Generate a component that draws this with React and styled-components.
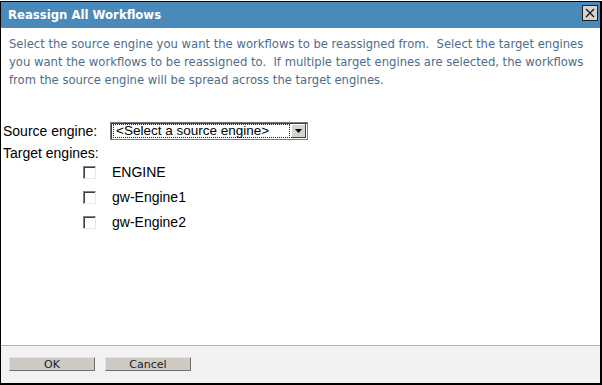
import React from "react";
import styled, { createGlobalStyle } from "styled-components";

const GlobalStyle = createGlobalStyle`
  html, body {
    margin: 0;
    padding: 0;
    background: #fff;
  }
  body {
    font-family: "DejaVu Sans", sans-serif;
  }
`;

const Dialog = styled.div`
  margin-top: 1px;
  width: 602px;
  height: 384px;
  box-sizing: border-box;
  border-top: 1px solid #000;
  border-left: 1px solid #000;
  border-right: 2px solid #000;
  border-bottom: 2px solid #000;
  display: flex;
  flex-direction: column;
  background: #fff;
`;

const TitleBar = styled.div`
  height: 26px;
  flex-shrink: 0;
  background: #4a8aba;
  display: flex;
  align-items: center;
  justify-content: space-between;
  padding: 0 2px 0 7px;
  .dialog__title {
    color: #fff;
    font-family: "DejaVu Sans", sans-serif;
    font-weight: bold;
    font-size: 11.7px;
  }
`;

const CloseButton = styled.div`
  width: 14px;
  height: 14px;
  background: #d6d3ce;
  border: 1px solid #222;
  display: flex;
  align-items: center;
  justify-content: center;
  align-self: flex-start;
  margin-top: 3px;
`;

const Content = styled.div`
  flex: 1;
  padding-top: 7px;
`;

const Description = styled.div`
  color: #4e6d8c;
  font-size: 11.6px;
  line-height: 18px;
  padding-left: 8px;
  white-space: pre;
  margin-bottom: 31px;
`;

const FieldRow = styled.div`
  display: flex;
  align-items: ${(p) => (p.top ? "flex-start" : "center")};
  height: ${(p) => p.height || 22}px;
  box-sizing: border-box;
  padding: ${(p) => p.top || 0}px 0 0 2px;
  font-family: "Liberation Sans", Arial, sans-serif;
  font-size: 14px;
  line-height: 16px;
  color: #000;
  .field__label {
    width: 107px;
  }
`;

const SelectBox = styled.div`
  width: 198px;
  height: 18px;
  box-sizing: border-box;
  border: 1px solid #7a7a7a;
  box-shadow: inset 1px 1px 0 #404040;
  display: flex;
  background: #fff;
  .select__value {
    flex: 1;
    box-sizing: border-box;
    height: 14px;
    margin: 1px 1px 0 2px;
    border: 1px dotted #222;
    font-size: 13.5px;
    line-height: 12px;
    padding-left: 2px;
    white-space: nowrap;
  }
  .select__arrow {
    width: 15px;
    margin: 1px 1px 1px 0;
    background: #d6d3ce;
    box-shadow: inset -1px -1px 0 #404040, inset 1px 1px 0 #fff;
    display: flex;
    align-items: center;
    justify-content: center;
  }
`;

const CheckRow = styled.div`
  display: flex;
  align-items: center;
  height: 25px;
  padding-left: 82px;
  font-family: "Liberation Sans", Arial, sans-serif;
  font-size: 14px;
  color: #000;
`;

const CheckBox = styled.span`
  width: 13px;
  height: 13px;
  box-sizing: border-box;
  border-top: 1px solid #808080;
  border-left: 1px solid #808080;
  border-right: 1px solid #e8e8e8;
  border-bottom: 1px solid #e8e8e8;
  box-shadow: inset 1px 1px 0 #404040;
  background: #fff;
  margin-right: 16px;
`;

const Footer = styled.div`
  height: 38px;
  flex-shrink: 0;
  box-sizing: border-box;
  border-top: 1px solid #b4b4b4;
  background: #f2f2f2;
  display: flex;
  align-items: flex-start;
  gap: 10px;
  padding: 11px 0 0 8px;
`;

const Button = styled.div`
  width: 86px;
  height: 14px;
  box-sizing: border-box;
  background: #cdcac4;
  border-top: 1px solid #e4e2de;
  border-left: 1px solid #e4e2de;
  border-right: 1px solid #6e6e6e;
  border-bottom: 1px solid #6e6e6e;
  display: flex;
  align-items: center;
  justify-content: center;
  font-size: 11px;
  color: #1a1a1a;
`;

const engines = ["ENGINE", "gw-Engine1", "gw-Engine2"];

const descriptionLines = [
  "Select the source engine you want the workflows to be reassigned from.  Select the target engines",
  "you want the workflows to be reassigned to.  If multiple target engines are selected, the workflows",
  "from the source engine will be spread across the target engines.",
];

const App = () => {
  return (
    <>
      <GlobalStyle />
      <Dialog>
        <TitleBar>
          <span className="dialog__title">Reassign All Workflows</span>
          <CloseButton>
            <svg width="10" height="10" viewBox="0 0 10 10">
              <path d="M1 1 L9 9 M9 1 L1 9" stroke="#111" strokeWidth="1.2" />
            </svg>
          </CloseButton>
        </TitleBar>
        <Content>
          <Description>{descriptionLines.join("\n")}</Description>
          <FieldRow height={22}>
            <span className="field__label">Source engine:</span>
            <SelectBox>
              <div className="select__value">&lt;Select a source engine&gt;</div>
              <div className="select__arrow">
                <svg width="7" height="4" viewBox="0 0 7 4">
                  <path d="M0 0 H7 L3.5 4 Z" fill="#000" />
                </svg>
              </div>
            </SelectBox>
          </FieldRow>
          <FieldRow height={17.5} top={3}>
            <span>Target engines:</span>
          </FieldRow>
          {engines.map((engine) => (
            <CheckRow key={engine}>
              <CheckBox />
              {engine}
            </CheckRow>
          ))}
        </Content>
        <Footer>
          <Button>OK</Button>
          <Button>Cancel</Button>
        </Footer>
      </Dialog>
    </>
  );
};

export default App;
